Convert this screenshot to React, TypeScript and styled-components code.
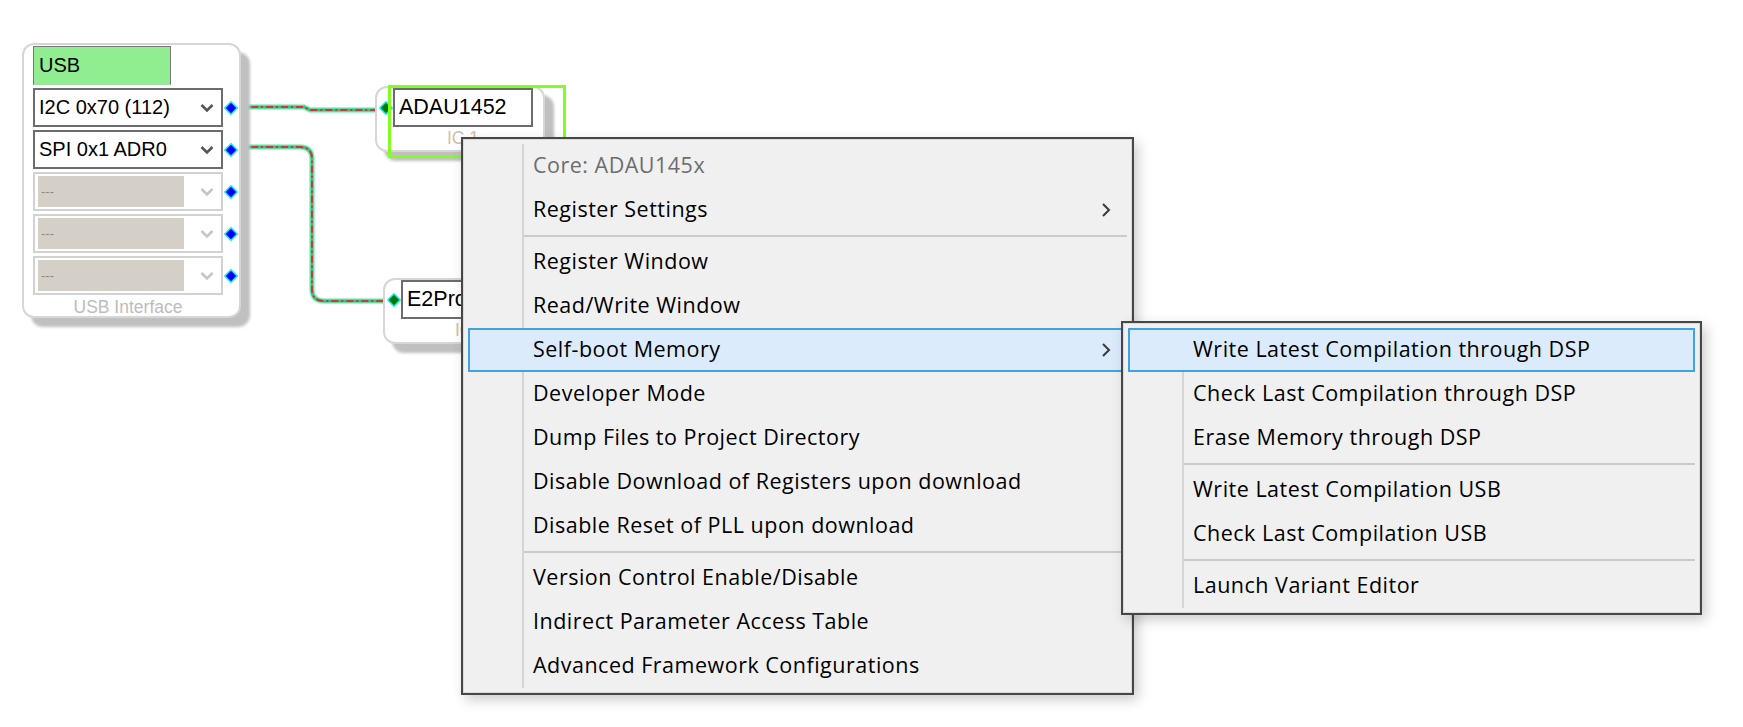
import React from 'react';
import styled, { createGlobalStyle } from 'styled-components';

const GlobalStyle = createGlobalStyle`
  html, body {
    margin: 0;
    padding: 0;
    background: #ffffff;
  }
  body {
    font-family: 'Liberation Sans', Arial, sans-serif;
  }
`;

const Canvas = styled.div`
  position: relative;
  width: 1743px;
  height: 727px;
  background: #ffffff;
  overflow: hidden;
`;

const Wires = styled.svg`
  position: absolute;
  left: 0;
  top: 0;
`;

const BlockFrame = styled.div<{ $x: number; $y: number; $w: number; $h: number }>`
  position: absolute;
  left: ${(p) => p.$x}px;
  top: ${(p) => p.$y}px;
  width: ${(p) => p.$w}px;
  height: ${(p) => p.$h}px;
  box-sizing: border-box;
  background: #ffffff;
  border: 2px solid #d6d6d6;
  border-radius: 12px;
  box-shadow: 9px 9px 3px #c0c0c0;
  display: flex;
  flex-direction: column;
`;

const UsbBody = styled.div`
  display: flex;
  flex-direction: column;
  gap: 3px;
  padding: 1px 0 0 9px;
`;

const BlockTitle = styled.div`
  width: 138px;
  height: 39px;
  box-sizing: border-box;
  background: #90ee90;
  border: 1.5px solid #7a7a7a;
  border-bottom-color: #a8d8a8;
  padding-left: 5px;
  display: flex;
  align-items: center;
  font-size: 20px;
  color: #000;
`;

const PortLine = styled.div`
  display: flex;
  align-items: center;
`;

const SelectBox = styled.div<{ $disabled?: boolean }>`
  width: 190px;
  height: 39px;
  box-sizing: border-box;
  border: 2px solid ${(p) => (p.$disabled ? '#d2d2d2' : '#6c6c6c')};
  background: #ffffff;
  display: flex;
  align-items: center;
  justify-content: space-between;
  padding: 0 7px 0 ${(p) => (p.$disabled ? '3px' : '4px')};
  font-size: 20px;
  color: #000;
`;

const EmptyValue = styled.div`
  width: 146px;
  height: 31px;
  background: #d4d0c8;
  color: #8c8c8c;
  font-size: 13px;
  display: flex;
  align-items: center;
  padding-left: 3px;
  box-sizing: border-box;
`;

const BlockCaption = styled.div<{ $w: number; $color: string }>`
  width: ${(p) => p.$w}px;
  text-align: center;
  font-size: 17.5px;
  line-height: 18px;
  color: ${(p) => p.$color};
`;

const IcBody = styled.div`
  display: flex;
  flex-direction: column;
  padding-left: 2px;
`;

const NameBox = styled.div`
  width: 140px;
  height: 39px;
  box-sizing: border-box;
  border: 2px solid #6c6c6c;
  background: #ffffff;
  padding-left: 4px;
  display: flex;
  align-items: center;
  font-size: 21.5px;
  color: #000;
  overflow: hidden;
  white-space: nowrap;
`;

const IcCaption = styled(BlockCaption)`
  margin-left: 14px;
  line-height: 22px;
`;

const Selection = styled.div`
  position: absolute;
  left: 11px;
  top: -3px;
  width: 178px;
  height: 73px;
  box-sizing: border-box;
  border: 3px solid #80ff20;
  pointer-events: none;
`;

const Menu = styled.div<{ $x: number; $y: number; $w: number; $h: number }>`
  position: absolute;
  left: ${(p) => p.$x}px;
  top: ${(p) => p.$y}px;
  width: ${(p) => p.$w}px;
  height: ${(p) => p.$h}px;
  box-sizing: border-box;
  background: #f0f0f0;
  border: 2px solid #474747;
  box-shadow: inset 0 0 0 1px #dadada, 4px 5px 12px rgba(0, 0, 0, 0.2);
  padding: 5px;
  display: flex;
  flex-direction: column;
  font-family: 'Open Sans', 'Noto Sans', sans-serif;
`;

const MenuRow = styled.div<{ $active?: boolean }>`
  height: 44px;
  flex-shrink: 0;
  display: flex;
  align-items: stretch;
  background: ${(p) => (p.$active ? '#dcebfc' : 'transparent')};
  box-shadow: ${(p) => (p.$active ? 'inset 0 0 0 2px #40a3e0' : 'none')};
`;

const IconCell = styled.div`
  width: 54px;
  flex-shrink: 0;
`;

const RowLabel = styled.div<{ $active?: boolean; $disabled?: boolean }>`
  flex: 1;
  border-left: 2px solid ${(p) => (p.$active ? 'transparent' : '#d5d5d5')};
  padding: 0 0 3px 9px;
  display: flex;
  align-items: center;
  font-size: 21.5px;
  letter-spacing: 0.5px;
  color: ${(p) => (p.$disabled ? '#6d6d6d' : '#000000')};
  white-space: nowrap;
`;

const ArrowCell = styled.div`
  width: 42px;
  flex-shrink: 0;
  display: flex;
  align-items: center;
  justify-content: center;
`;

const Separator = styled.div`
  height: 8px;
  flex-shrink: 0;
  margin-left: 54px;
  border-left: 2px solid #d5d5d5;
  display: flex;
  align-items: center;
`;

const SeparatorLine = styled.div`
  flex: 1;
  height: 2px;
  background: #cacaca;
`;

const Diamond = ({ fill }: { fill: string }) => (
  <svg width="14" height="14" viewBox="0 0 14 14" style={{ flexShrink: 0 }}>
    <polygon points="7,0.8 13.2,7 7,13.2 0.8,7" fill={fill} stroke="#19e8f0" strokeWidth="1.6" />
  </svg>
);

const Chevron = ({ color }: { color: string }) => (
  <svg width="14" height="10" viewBox="0 0 14 10">
    <polyline points="1.5,2 7,7.5 12.5,2" fill="none" stroke={color} strokeWidth="2.6" />
  </svg>
);

const SubArrow = () => (
  <svg width="10" height="16" viewBox="0 0 10 16">
    <polyline points="2,2 8,8 2,14" fill="none" stroke="#3a3a3a" strokeWidth="2" />
  </svg>
);

type Item =
  | { kind: 'sep' }
  | { kind: 'item'; label: string; disabled?: boolean; active?: boolean; sub?: boolean };

const mainItems: Item[] = [
  { kind: 'item', label: 'Core: ADAU145x', disabled: true },
  { kind: 'item', label: 'Register Settings', sub: true },
  { kind: 'sep' },
  { kind: 'item', label: 'Register Window' },
  { kind: 'item', label: 'Read/Write Window' },
  { kind: 'item', label: 'Self-boot Memory', sub: true, active: true },
  { kind: 'item', label: 'Developer Mode' },
  { kind: 'item', label: 'Dump Files to Project Directory' },
  { kind: 'item', label: 'Disable Download of Registers upon download' },
  { kind: 'item', label: 'Disable Reset of PLL upon download' },
  { kind: 'sep' },
  { kind: 'item', label: 'Version Control Enable/Disable' },
  { kind: 'item', label: 'Indirect Parameter Access Table' },
  { kind: 'item', label: 'Advanced Framework Configurations' },
];

const subItems: Item[] = [
  { kind: 'item', label: 'Write Latest Compilation through DSP', active: true },
  { kind: 'item', label: 'Check Last Compilation through DSP' },
  { kind: 'item', label: 'Erase Memory through DSP' },
  { kind: 'sep' },
  { kind: 'item', label: 'Write Latest Compilation USB' },
  { kind: 'item', label: 'Check Last Compilation USB' },
  { kind: 'sep' },
  { kind: 'item', label: 'Launch Variant Editor' },
];

const ports = [
  { label: 'I2C 0x70 (112)' },
  { label: 'SPI 0x1 ADR0' },
  { label: null },
  { label: null },
  { label: null },
];

const MenuList = ({ items, arrows }: { items: Item[]; arrows: boolean }) => (
  <>
    {items.map((item, i) =>
      item.kind === 'sep' ? (
        <Separator key={i}>
          <SeparatorLine />
        </Separator>
      ) : (
        <MenuRow key={i} $active={item.active}>
          <IconCell />
          <RowLabel $active={item.active} $disabled={item.disabled}>
            {item.label}
          </RowLabel>
          {arrows && <ArrowCell>{item.sub && <SubArrow />}</ArrowCell>}
        </MenuRow>
      )
    )}
  </>
);

const Wire = ({ d }: { d: string }) => (
  <g fill="none">
    <path d={d} stroke="#86f2cf" strokeWidth="5.5" />
    <path d={d} stroke="#3fbf7f" strokeWidth="3" />
    <path d={d} stroke="#d8352a" strokeWidth="2" strokeDasharray="7 3 2 3" />
  </g>
);

const App = () => {
  return (
    <Canvas>
      <GlobalStyle />
      <Wires width="1743" height="727">
        <Wire d="M 236 107 H 304 L 310 110 H 382" />
        <Wire d="M 236 147 H 300 Q 312 147 312 159 V 289 Q 312 301 324 301 H 390" />
      </Wires>

      <BlockFrame $x={22} $y={43} $w={219} $h={275}>
        <UsbBody>
          <BlockTitle>USB</BlockTitle>
          {ports.map((port, i) => (
            <PortLine key={i}>
              <SelectBox $disabled={!port.label}>
                {port.label ? <span>{port.label}</span> : <EmptyValue>---</EmptyValue>}
                <Chevron color={port.label ? '#555555' : '#c6c6c6'} />
              </SelectBox>
              <span style={{ width: 1 }} />
              <Diamond fill="#0000ff" />
            </PortLine>
          ))}
          <BlockCaption $w={190} $color="#bcbcbc">
            USB Interface
          </BlockCaption>
        </UsbBody>
      </BlockFrame>

      <BlockFrame $x={375} $y={86} $w={170} $h={66}>
        <IcBody>
          <PortLine>
            <Diamond fill="#007a00" />
            <NameBox>ADAU1452</NameBox>
          </PortLine>
          <IcCaption $w={140} $color="#d6bda6">
            IC 1
          </IcCaption>
        </IcBody>
        <Selection />
      </BlockFrame>

      <BlockFrame $x={383} $y={278} $w={170} $h={66}>
        <IcBody>
          <PortLine>
            <Diamond fill="#007a00" />
            <NameBox>E2Prom</NameBox>
          </PortLine>
          <IcCaption $w={140} $color="#d6bda6">
            IC 2
          </IcCaption>
        </IcBody>
      </BlockFrame>

      <Menu $x={461} $y={137} $w={673} $h={558}>
        <MenuList items={mainItems} arrows />
      </Menu>

      <Menu $x={1121} $y={321} $w={581} $h={294}>
        <MenuList items={subItems} arrows={false} />
      </Menu>
    </Canvas>
  );
};

export default App;
